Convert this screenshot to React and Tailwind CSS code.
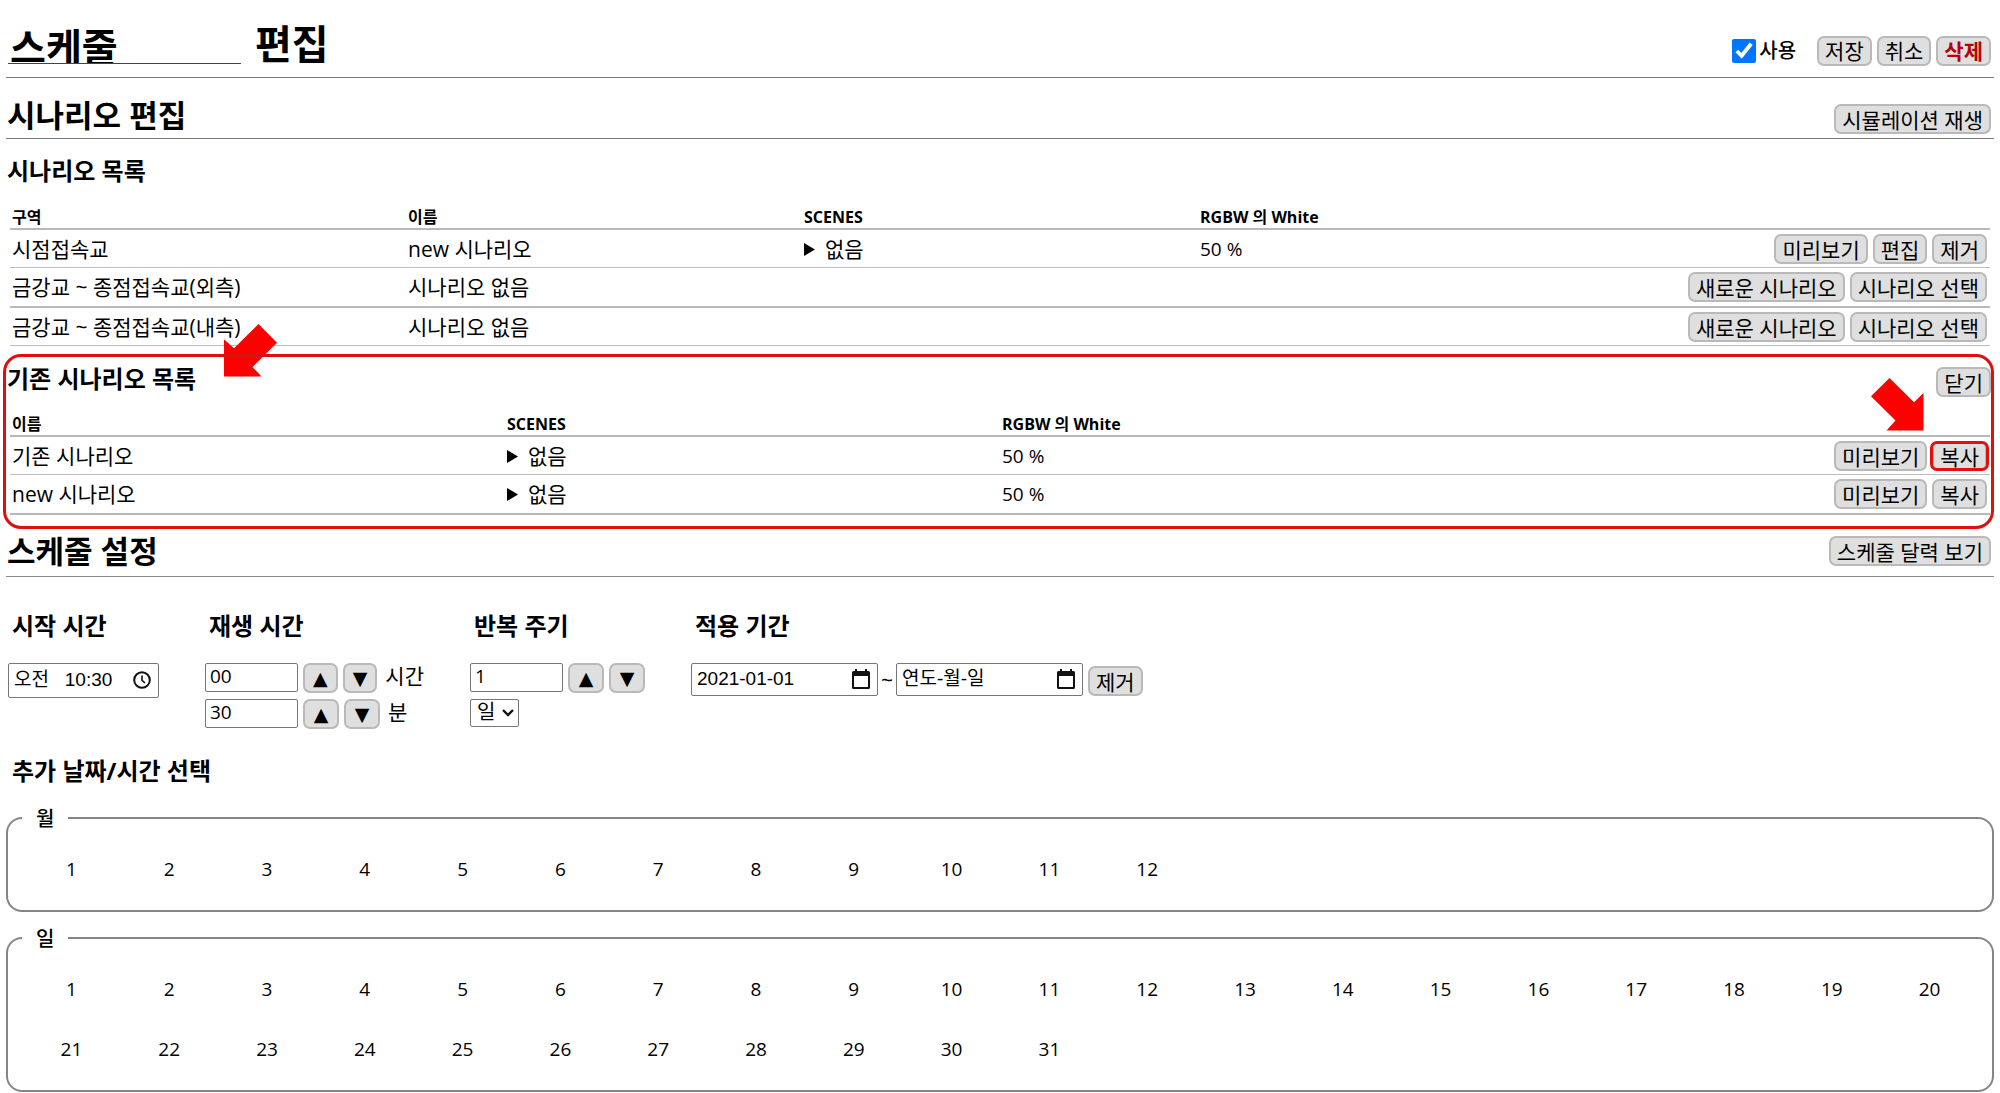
import React, { useState } from "react";

const BUTTON =
  "h-[30px] rounded-[7px] border-2 border-[#b9b9b9] bg-[#dfdfdf] pt-px text-[21px] leading-[24px] whitespace-nowrap";
const FIELD = "rounded-[2px] border border-[#767676] bg-white text-black";

function Button({ children, className = "px-[6px]", ...rest }) {
  return (
    <button type="button" className={`${BUTTON} ${className}`} {...rest}>
      {children}
    </button>
  );
}

function ArrowButton({ children, ...rest }) {
  return (
    <button
      type="button"
      className="h-[30px] w-[36px] rounded-[7px] border-2 border-[#b9b9b9] bg-[#dfdfdf] font-['DejaVu_Sans'] text-[19px] leading-[24px]"
      {...rest}
    >
      {children}
    </button>
  );
}

function SectionTitle({ children }) {
  return <h2 className="mb-[3px] text-[31px] leading-[31px] font-bold">{children}</h2>;
}

function Th({ children }) {
  return (
    <th className="border-b-2 border-[#b8b8b8] px-[2px] text-left text-[16px] leading-[22px] font-bold">
      {children}
    </th>
  );
}

function Td({ children, strong, latin }) {
  return (
    <td
      className={`px-[2px] pt-1 ${latin ? "text-[19px]" : "text-[21px]"} ${
        strong ? "border-b-2 border-[#b8b8b8] pb-1" : "border-b border-[#bdbdbd] pb-[3px]"
      }`}
    >
      {children}
    </td>
  );
}

function Actions({ items, marked }) {
  return (
    <div className="flex justify-end gap-[5px] pr-[1px]">
      {items.map((item) => (
        <span key={item} className="relative flex">
          <Button>{item}</Button>
          {item === marked && (
            <span className="pointer-events-none absolute -inset-x-[2px] inset-y-0 rounded-[7px] border-[3px] border-[#e01010]" />
          )}
        </span>
      ))}
    </div>
  );
}

function Scenes() {
  return (
    <details>
      <summary className="flex items-center gap-[10px] leading-[30px]">
        <svg viewBox="0 0 11 13" className="h-[13px] w-[11px]" aria-hidden="true">
          <path d="M0 0L11 6.5L0 13Z" />
        </svg>
        없음
      </summary>
    </details>
  );
}

const ZONES = [
  { zone: "시점접속교", name: "new 시나리오", scenes: true, white: "50 %", actions: ["미리보기", "편집", "제거"] },
  { zone: "금강교 ~ 종점접속교(외측)", name: "시나리오 없음", actions: ["새로운 시나리오", "시나리오 선택"], strong: true },
  { zone: "금강교 ~ 종점접속교(내측)", name: "시나리오 없음", actions: ["새로운 시나리오", "시나리오 선택"] },
];

const SAVED = [
  { name: "기존 시나리오", white: "50 %", marked: "복사" },
  { name: "new 시나리오", white: "50 %", strong: true },
];

function Stepper({ label, initial, unit, pad = 0 }) {
  const [value, setValue] = useState(initial);
  const step = (n) =>
    setValue((v) => String(Math.max(0, (parseInt(v, 10) || 0) + n)).padStart(pad, "0"));
  return (
    <div className="flex h-[30px] items-start gap-[5px]">
      <input
        aria-label={label}
        value={value}
        onChange={(e) => setValue(e.target.value)}
        className={`${FIELD} h-[29px] w-[93px] px-1 pb-[3px] text-[19px] leading-[24px]`}
      />
      <ArrowButton aria-label={`${label} 증가`} onClick={() => step(1)}>
        ▲
      </ArrowButton>
      <ArrowButton aria-label={`${label} 감소`} onClick={() => step(-1)}>
        ▼
      </ArrowButton>
      {unit && <span className="pl-[3px] leading-[27px] whitespace-nowrap">{unit}</span>}
    </div>
  );
}

function ClockIcon() {
  return (
    <svg viewBox="0 0 18 18" className="size-[18px]" fill="none" stroke="#111" strokeWidth="2" aria-hidden="true">
      <circle cx="9" cy="9" r="7.8" />
      <path d="M9 4.5V9.4L12 12" strokeWidth="1.6" />
    </svg>
  );
}

function CalendarIcon() {
  return (
    <svg viewBox="0 0 18 20" className="h-[20px] w-[18px]" fill="#111" aria-hidden="true">
      <path d="M3 0H5V2H13V0H15V2H16.5Q18 2 18 3.5V18.5Q18 20 16.5 20H1.5Q0 20 0 18.5V3.5Q0 2 1.5 2H3ZM2 7V18H16V7Z" fillRule="evenodd" />
    </svg>
  );
}

function PickerField({ label, value, icon, className }) {
  return (
    <div className={`${FIELD} flex items-center pr-[7px] pb-px pl-[5px] ${className}`}>
      <input
        aria-label={label}
        defaultValue={value}
        className="w-0 flex-1 bg-transparent font-['Liberation_Sans','Noto_Sans_CJK_KR',sans-serif] text-[19px] leading-[24px]"
      />
      <button type="button" aria-label={`${label} 선택`} className="flex">
        {icon}
      </button>
    </div>
  );
}

function SettingHeading({ children }) {
  return <h3 className="mb-[24px] pl-1 text-[24px] leading-[26px] font-bold">{children}</h3>;
}

function NumberGroup({ title, count, className }) {
  const [picked, setPicked] = useState([]);
  const toggle = (n) =>
    setPicked((p) => (p.includes(n) ? p.filter((x) => x !== n) : [...p, n]));
  return (
    <fieldset className={`rounded-[16px] border-2 border-[#858585] px-[14px] pb-[11px] ${className}`}>
      <legend className="px-[14px] pt-[2px] text-[20px] leading-[22px] font-medium">{title}</legend>
      <div className="grid grid-cols-20 pt-[9px]">
        {Array.from({ length: count }, (_, i) => i + 1).map((n) => (
          <button
            key={n}
            type="button"
            aria-pressed={picked.includes(n)}
            onClick={() => toggle(n)}
            className="h-[60px] pl-px text-center text-[19px] aria-pressed:bg-[#dfdfdf]"
          >
            {n}
          </button>
        ))}
      </div>
    </fieldset>
  );
}

export default function App() {
  return (
    <main className="bg-white px-[6px] font-['Open_Sans','Noto_Sans_CJK_KR',sans-serif] text-[21px] leading-[30px] text-black">
      <header className="flex items-end justify-between border-b border-[#777] pt-6 pr-[3px] pb-[13px] pl-[2px]">
        <h1 className="flex items-end gap-[14px] text-[40px] leading-[40px] font-bold">
          <input
            aria-label="스케줄 이름"
            defaultValue="스케줄"
            className="h-[37px] w-[233px] border-b border-[#444] pl-[2px] text-[39px] leading-[36px]"
          />
          <span>편집</span>
        </h1>
        <div className="-mb-[2px] flex items-center gap-[5px]">
          <label className="mr-4 flex items-center gap-[3px] pt-px text-[20px] font-medium">
            <input type="checkbox" defaultChecked className="size-[24px] accent-[#0075ff]" />
            사용
          </label>
          <Button>저장</Button>
          <Button>취소</Button>
          <Button className="px-[6px] font-bold text-[#b8000c]">삭제</Button>
        </div>
      </header>

      <div className="flex items-end justify-between border-b border-[#777] pt-[22px] pr-[3px] pb-1 pl-px">
        <SectionTitle>시나리오 편집</SectionTitle>
        <Button>시뮬레이션 재생</Button>
      </div>

      <section className="pt-[19px]">
        <h3 className="pl-px text-[24px] leading-[26px] font-bold">시나리오 목록</h3>
        <div className="mt-[22px] px-1">
          <table className="w-full table-fixed border-separate border-spacing-0">
            <thead>
              <tr>
                <Th>구역</Th>
                <Th>이름</Th>
                <Th>SCENES</Th>
                <Th>RGBW 의 White</Th>
                <Th />
              </tr>
            </thead>
            <tbody>
              {ZONES.map((row) => (
                <tr key={row.zone}>
                  <Td strong={row.strong}>{row.zone}</Td>
                  <Td strong={row.strong}>{row.name}</Td>
                  <Td strong={row.strong}>{row.scenes && <Scenes />}</Td>
                  <Td strong={row.strong} latin>{row.white}</Td>
                  <Td strong={row.strong}>
                    <Actions items={row.actions} />
                  </Td>
                </tr>
              ))}
            </tbody>
          </table>
        </div>
      </section>

      <section className="relative mt-2 pt-[13px] pb-[14px]">
        <div className="pointer-events-none absolute inset-y-0 right-0 -left-[3px] z-10 rounded-[18px] border-[3px] border-[#dd1010]" />
        <svg
          viewBox="0 0 54 53"
          className="pointer-events-none absolute -top-[30px] left-[218px] h-[53px] w-[54px]"
          fill="#ff0000"
          aria-hidden="true"
        >
          <path d="M34.5 0L53 18.7L28.5 43L37.5 52.5H0V15.3L10 24.3Z" />
        </svg>
        <svg
          viewBox="0 0 53 53"
          className="pointer-events-none absolute top-[24px] right-[70px] size-[53px]"
          fill="#ff0000"
          aria-hidden="true"
        >
          <path d="M18.5 0L43 24.3L52.5 15V52.5H15.5L24.5 42.5L0 18.3Z" />
        </svg>
        <div className="flex items-start justify-between pr-[3px] pl-px">
          <h3 className="text-[24px] leading-[24px] font-bold">기존 시나리오 목록</h3>
          <Button>닫기</Button>
        </div>
        <div className="mt-4 px-1">
          <table className="w-full table-fixed border-separate border-spacing-0">
            <thead>
              <tr>
                <Th>이름</Th>
                <Th>SCENES</Th>
                <Th>RGBW 의 White</Th>
                <Th />
              </tr>
            </thead>
            <tbody>
              {SAVED.map((row) => (
                <tr key={row.name}>
                  <Td strong={row.strong}>{row.name}</Td>
                  <Td strong={row.strong}>
                    <Scenes />
                  </Td>
                  <Td strong={row.strong} latin>{row.white}</Td>
                  <Td strong={row.strong}>
                    <Actions items={["미리보기", "복사"]} marked={row.marked} />
                  </Td>
                </tr>
              ))}
            </tbody>
          </table>
        </div>
      </section>

      <div className="flex items-start justify-between border-b border-[#8a8a8a] pt-[7px] pr-[3px] pb-[6px] pl-px">
        <SectionTitle>스케줄 설정</SectionTitle>
        <Button>스케줄 달력 보기</Button>
      </div>

      <section className="flex gap-[46px] pt-9 pl-[2px]">
        <div className="w-[151px]">
          <SettingHeading>시작 시간</SettingHeading>
          <PickerField label="시작 시간" value={"오전 \u00a0 10:30"} icon={<ClockIcon />} className="h-[35px]" />
        </div>
        <div className="w-[219px]">
          <SettingHeading>재생 시간</SettingHeading>
          <div className="flex flex-col gap-[6px]">
            <Stepper label="재생 시간" initial="00" unit="시간" pad={2} />
            <Stepper label="재생 분" initial="30" unit="분" pad={2} />
          </div>
        </div>
        <div className="w-[175px]">
          <SettingHeading>반복 주기</SettingHeading>
          <div className="flex flex-col items-start gap-[6px]">
            <Stepper label="반복 주기" initial="1" />
            <div className="relative flex">
              <select
                aria-label="반복 단위"
                className={`${FIELD} h-[28px] w-[49px] appearance-none pb-[2px] pl-[6px] text-[20px] leading-[24px]`}
              >
                <option>일</option>
                <option>주</option>
                <option>월</option>
              </select>
              <svg
                viewBox="0 0 12 8"
                className="pointer-events-none absolute top-[10px] right-[5px] h-[8px] w-[12px]"
                fill="none"
                stroke="#111"
                strokeWidth="2.4"
                aria-hidden="true"
              >
                <path d="M1 1L6 6L11 1" />
              </svg>
            </div>
          </div>
        </div>
        <div>
          <SettingHeading>적용 기간</SettingHeading>
          <div className="flex items-start">
            <PickerField label="시작일" value="2021-01-01" icon={<CalendarIcon />} className="h-[33px] w-[187px]" />
            <span className="w-[18px] text-center leading-[34px]">~</span>
            <PickerField label="종료일" value="연도-월-일" icon={<CalendarIcon />} className="h-[33px] w-[187px]" />
            <Button className="mt-[3px] ml-[5px] px-[6px]">제거</Button>
          </div>
        </div>
      </section>

      <h3 className="mt-7 pl-[6px] text-[24px] leading-[28px] font-bold">추가 날짜/시간 선택</h3>
      <NumberGroup title="월" count={12} className="mt-[21px]" />
      <NumberGroup title="일" count={31} className="mt-[14px]" />
    </main>
  );
}
